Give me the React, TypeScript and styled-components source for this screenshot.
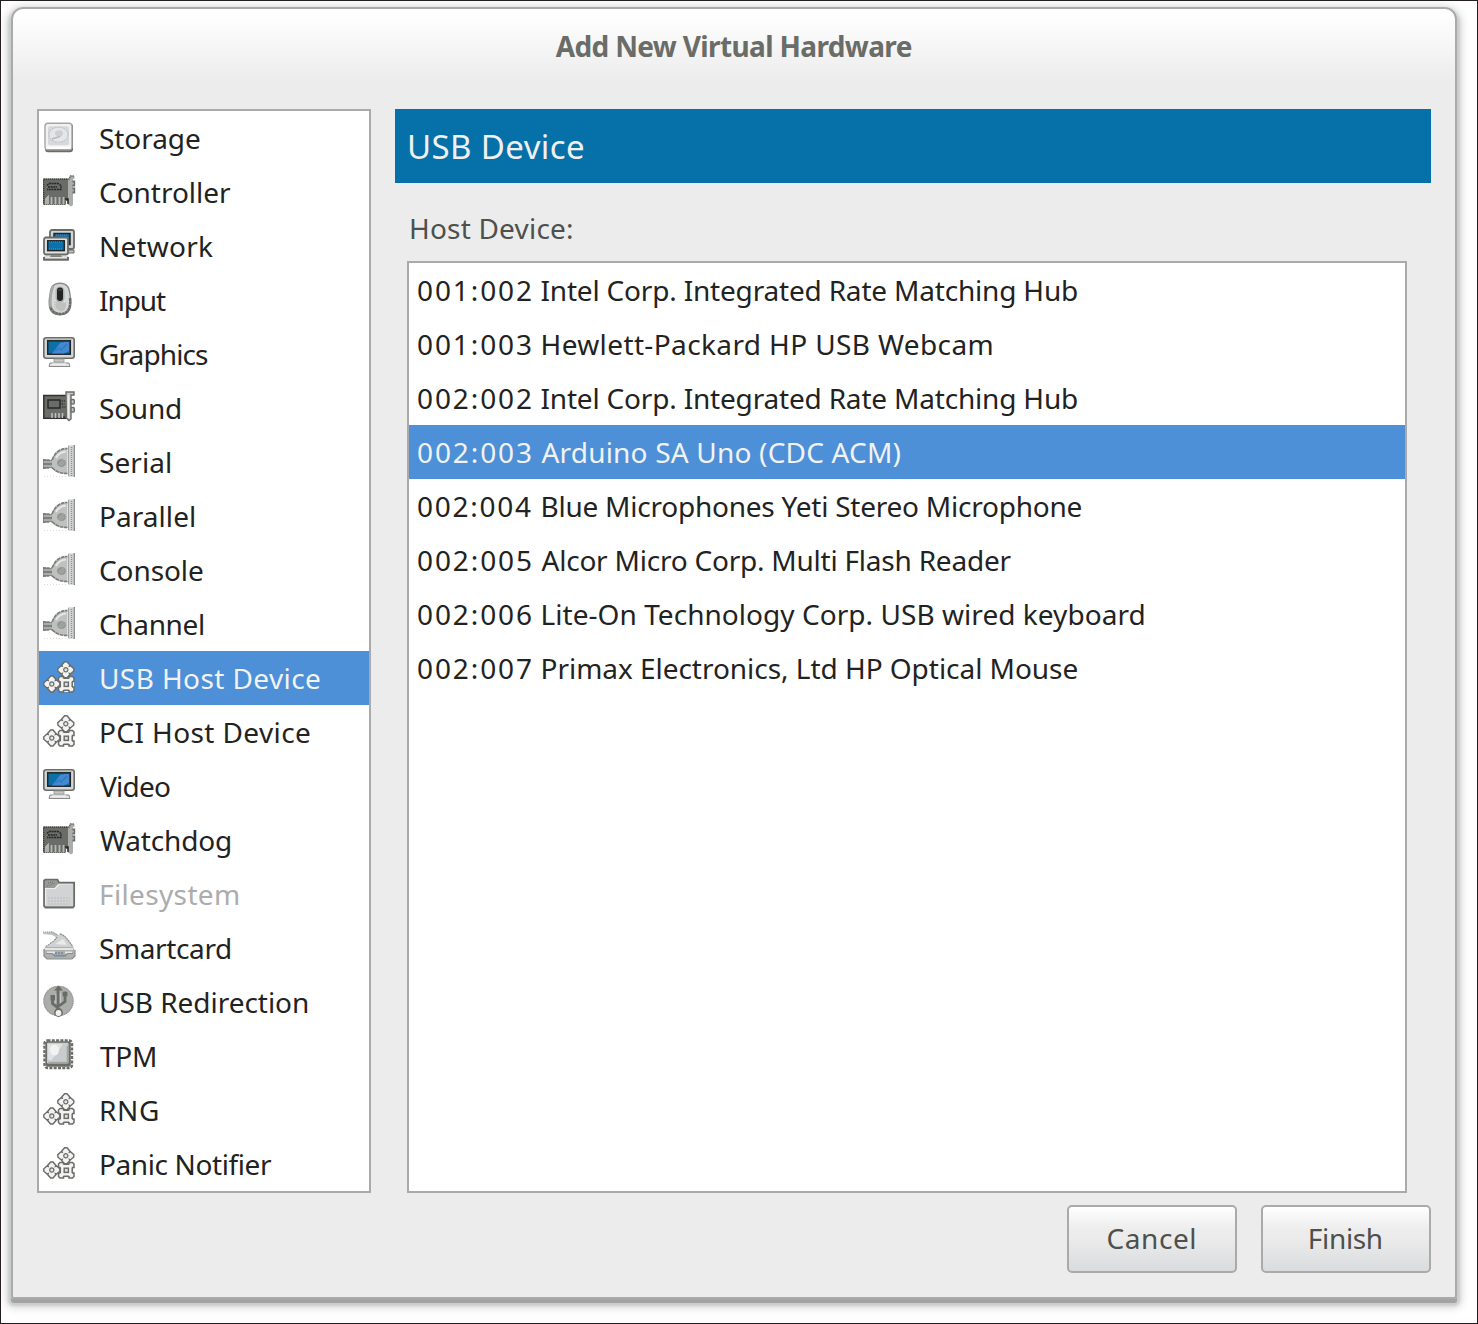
import React from 'react';
import styled, { createGlobalStyle } from 'styled-components';

const FONT = '"Noto Sans", "Open Sans", sans-serif';

const GlobalStyle = createGlobalStyle`
  *, *::before, *::after { box-sizing: border-box; }
  body { margin: 0; background: #fff; font-family: ${FONT}; }
`;

const Desktop = styled.div`
  width: 1478px;
  height: 1324px;
  padding: 6px 20px 0 10px;
  border: 1px solid #231f20;
  background: #fff;
  overflow: hidden;
`;

const Dialog = styled.section`
  width: 1446px;
  height: 1292px;
  display: flex;
  flex-direction: column;
  border: 2px solid #aaaaaa;
  border-radius: 12px 12px 3px 3px;
  background: linear-gradient(#ffffff 0, #fefefe 8px, #ececec 72px);
  box-shadow: 0 4px 0 0 #a3a3a3, 0 4px 3px 3px #c9cbcd, 0 4px 9px 5px rgba(0, 0, 0, 0.14);
`;

const TitleBar = styled.header`
  display: flex;
  justify-content: center;
  height: 74px;
  line-height: 74px;
  font-size: 28px;
  font-weight: 700;
  color: #6a6c67;
`;

const Body = styled.div`
  display: flex;
  gap: 24px;
  padding: 26px 24px 0;
`;

const ListBox = styled.ul<{ $width: number }>`
  width: ${(p) => p.$width}px;
  margin: 0;
  padding: 0;
  list-style: none;
  border: 2px solid #aaaaaa;
  background: #fff;
`;

const HardwareRow = styled.li<{ $selected?: boolean; $disabled?: boolean }>`
  display: flex;
  gap: 25px;
  height: 54px;
  padding-left: 4px;
  line-height: 54px;
  font-size: 28px;
  color: ${(p) => (p.$selected ? '#f2f2f2' : p.$disabled ? '#acacac' : '#1f2322')};
  background: ${(p) => (p.$selected ? '#4d90d7' : 'transparent')};
`;

const IconBox = styled.svg`
  display: block;
  flex: none;
  width: 32px;
  height: 32px;
  margin-top: 10px;
  overflow: visible;
`;

const Panel = styled.main`
  display: flex;
  flex-direction: column;
  width: 1036px;
`;

const Banner = styled.h1`
  margin: 0;
  height: 74px;
  padding-left: 13px;
  line-height: 75px;
  font-size: 33px;
  font-weight: 400;
  color: #f0f0f0;
  background: #0671a9;
`;

const PanelContent = styled.div`
  display: flex;
  flex-direction: column;
  padding: 12px 24px 0 12px;
`;

const FieldLabel = styled.div`
  height: 66px;
  padding-left: 3px;
  line-height: 66px;
  font-size: 28px;
  color: #4d504d;
`;

const DeviceList = styled(ListBox)`
  height: 932px;
`;

const DeviceRow = styled.li<{ $selected?: boolean }>`
  display: flex;
  height: 54px;
  padding-left: 9px;
  line-height: 54px;
  font-size: 28px;
  color: ${(p) => (p.$selected ? '#f2f2f2' : '#1f2322')};
  background: ${(p) => (p.$selected ? '#4d90d7' : 'transparent')};
`;

const DeviceId = styled.span`
  width: 123.500px;
  flex: none;
`;

const Actions = styled.footer`
  display: flex;
  justify-content: flex-end;
  gap: 24px;
  padding: 12px 24px 0;
`;

const Button = styled.button`
  display: flex;
  justify-content: center;
  width: 170px;
  height: 68px;
  padding: 0;
  border: 2px solid #aaaaaa;
  border-radius: 5px;
  background: linear-gradient(#ffffff, #ececec 36%, #ececec 48%, #d9dbdc);
  font: 400 28px/62px ${FONT};
  color: #4d504d;
`;

const Spaced = styled.span`
  display: block;
  flex: none;
  white-space: pre;
`;

const pen = document.createElement('canvas').getContext('2d')!;

/** A label tracked so that its letters span the given width. */
function Label({ text, width, size = 28, weight = 400 }: { text: string; width: number; size?: number; weight?: number }) {
  pen.font = `${weight} ${size}px ${FONT}`;
  const m = pen.measureText(text);
  const left = m.actualBoundingBoxLeft;
  const tracking = (width - left - m.actualBoundingBoxRight) / (text.length - 1);
  return (
    <Spaced style={{ letterSpacing: tracking, marginLeft: left <= -1.5 ? left + 1 : left, marginRight: -tracking }}>
      {text}
    </Spaced>
  );
}

const DARK = '#6a6c67';
const MID = '#a9aaa7';
const INK = '#222524';

const StorageIcon = () => (
  <g transform="translate(0 1.200)">
    <rect x="2" y="1.500" width="28" height="28.500" rx="3" fill={DARK} />
    <rect x="2" y="1" width="27" height="26.500" rx="3" fill="#f1f1f1" stroke="#a5a6a4" strokeWidth="1.400" />
    <rect x="5" y="4" width="21" height="19" rx="2" fill="#d6d9dc" />
    <ellipse cx="15.500" cy="12.500" rx="9.500" ry="7.500" fill="#e4e6e7" stroke="#b7babb" strokeDasharray="2 1" />
    <path d="M9 17c2-2 7-1 9-4" fill="none" stroke="#b2b5b7" strokeWidth="1.500" />
    <ellipse cx="16" cy="11" rx="4" ry="3" fill="#cdd0d3" />
    <path d="M3 25.500h25" stroke="#fff" strokeWidth="2" />
  </g>
);

const CardIcon = () => (
  <>
    <path d="M0 3.500h26V26h-3v4H0z" fill={DARK} />
    <path d="M.7 30V4.200H25" fill="none" stroke="#3c3f3d" strokeWidth="1.400" strokeDasharray="1 1" />
    <path d="M4 10.500L6 8.500h9l3 2v4H4M5 12h9" fill="none" stroke={INK} strokeWidth="1.300" strokeDasharray="2 .7" />
    <path d="M3 29v-5l2-2v7M8.500 29v-7M12.500 29v-7M16.500 29v-7M20.500 29v-7" fill="none" stroke="#b7b9b6" strokeWidth="1.800" />
    <path d="M0 29.500h24" stroke="#999b97" strokeDasharray="1 1" />
    <path d="M25 5l2-4h4.500v3H30v26l-2 1.500-3-2z" fill="#abadab" />
    <path d="M25.500 5l2-4H31" fill="none" stroke={DARK} strokeWidth="1.500" strokeDasharray="1.500 .6" />
    <path d="M29.500 6.500h1.800v4h-1.800m0 3h1.800v4h-1.800" fill="none" stroke={DARK} strokeWidth="1.800" />
    <path d="M22 24h3v5" fill="none" stroke={INK} strokeWidth="1.500" />
  </>
);

const NetworkIcon = () => (
  <>
    <rect x="7" y="1" width="24" height="19" rx="2" fill="#d1d4d6" stroke={DARK} strokeWidth="1.800" />
    <rect x="11" y="4.500" width="16" height="11" fill="#0b6ea5" stroke={INK} strokeWidth="1.500" />
    <path d="M13 6h12M24 8v5" stroke="#4a90d9" strokeDasharray="1 1" />
    <path d="M24 21h7v3h-6z" fill="#bfc1c0" stroke={DARK} />
    <rect x="1" y="8.500" width="24" height="17" rx="2" fill="#dee0e1" stroke={DARK} strokeWidth="1.800" />
    <rect x="4.700" y="11.800" width="16.600" height="9.800" fill="#0b71aa" stroke={INK} strokeWidth="1.500" />
    <path d="M6 13h14M6 20h14" stroke="#4a90d9" strokeDasharray="1 1" />
    <path d="M8 26h10l1 2H7z" fill="#888a87" />
    <rect x="0" y="27.800" width="26" height="4" rx="1" fill={DARK} />
    <path d="M2 28.800h22" stroke="#ececec" strokeWidth="1.500" />
  </>
);

const MouseIcon = () => (
  <>
    <path d="M17 .2C9.500.2 7.600 5 7 12c-1 5-1.300 9.500 0 13.500C8.500 30 12 31.700 17 31.700s8.500-1.700 10-6.200c1.300-4 1-8.500 0-13.500C26.400 5 24.500.2 17 .2z" fill="#d5d7d8" stroke="#8b8d89" strokeWidth="1.400" />
    <path d="M10.500 3C8 7 7.500 16 7.500 20c0 6 3 10.500 9.500 11" fill="none" stroke={MID} strokeWidth="2.400" />
    <path d="M27 15c1 10-2 16-10 16-4 0-8-2-9.800-7" fill="none" stroke={DARK} strokeWidth="2.400" strokeDasharray="3 .4" />
    <path d="M11 19h12v5c-1 3-3 4.500-6 4.500S12 27 11 24z" fill="#bfc1c1" />
    <path d="M12 20v4c1 3 3 4 5 4M17 19h5" fill="none" stroke="#eee" strokeDasharray="1 1" />
    <rect x="12.500" y="3.500" width="9" height="16" rx="4.500" fill="#b0b2b1" />
    <rect x="14" y="4.500" width="6" height="13.500" rx="3" fill={INK} />
    <path d="M15.500 7h3" stroke="#5a5d5a" />
  </>
);

const MonitorIcon = () => (
  <>
    <rect x=".8" y=".8" width="30.400" height="20.400" rx="2.500" fill="#d4d6d7" stroke={DARK} strokeWidth="1.600" />
    <path d="M3 2h26" stroke="#a6a8a6" />
    <rect x="4.700" y="3.800" width="22.600" height="13.400" fill="#0b70a8" stroke={INK} strokeWidth="1.500" />
    <path d="M9 16.500L17 6l5-1h4v9l-5 2.500z" fill="#4488d2" />
    <path d="M12 14l4-3 2 2 6-6" fill="none" stroke="#2a7dbb" strokeWidth="1.500" />
    <path d="M11 22h10v3H11z" fill="#c4c6c7" stroke="#989a97" strokeWidth=".8" />
    <path d="M7 26h19l1 3.500H6z" fill="#dfe1e2" stroke="#898b88" />
    <path d="M9 27h14" stroke="#fff" />
  </>
);

const SoundIcon = () => (
  <>
    <rect x=".8" y="4.500" width="23" height="22.800" fill={DARK} stroke="#303331" strokeWidth="1.500" />
    <rect x="5" y="9" width="12" height="8" fill={DARK} stroke={INK} strokeWidth="1.400" />
    <path d="M18.500 10h4M18.500 13h3M19 16h4" stroke={INK} strokeWidth="1.200" strokeDasharray="1.500 .8" />
    <path d="M9 27v-5M12.500 27v-5M16 27v-5M19.500 27v-5" stroke="#c0c2bf" strokeWidth="1.500" />
    <path d="M23 4V1h8v3h-3v24l-2 1.500-2.500-2.500z" fill="#c9cbcb" stroke={DARK} strokeWidth="1.400" />
    <path d="M25.500 4v23" stroke="#eee" strokeWidth="1.500" />
    <rect x="28" y="8.500" width="3.300" height="4.500" rx="1" fill="#c7c8c6" stroke={DARK} strokeWidth="1.400" />
    <rect x="28" y="16.500" width="3.300" height="4.500" rx="1" fill="#c7c8c6" stroke={DARK} strokeWidth="1.400" />
    <path d="M21 25v3" stroke={INK} />
  </>
);

const PlugIcon = () => (
  <>
    <path d="M0 14l8 1 4-3v14l-4-3-8 1z" fill="#8b8d89" />
    <path d="M1 17h9M1 21h9" stroke="#c9cbc9" strokeWidth="1.200" />
    <path d="M0 15h7M0 19h9M0 23h6" stroke={DARK} strokeDasharray="3 .7" />
    <path d="M9 15C12 8 16 3.500 24.500 3.500v25C16 28.500 12.500 26 9 22.500z" fill="#bfc1c1" />
    <path d="M9 15C12 8 16 3.500 24.500 3.500M9 22.500c3.500 3.500 7 6 15.500 6" fill="none" stroke="#7c7e7a" strokeWidth="1.700" strokeDasharray="4 .6" />
    <path d="M13 13c2-4 5-6 10-6.500" fill="none" stroke="#e6e7e7" strokeWidth="2" />
    <ellipse cx="18.500" cy="18" rx="4.500" ry="4" fill="#959794" />
    <path d="M15.500 20l5-5M17.500 21l4-4" stroke="#b4b6b4" />
    <rect x="25" y=".3" width="6.700" height="31.400" fill="#d1d3d4" />
    <path d="M25.500 1v30" stroke="#a0a29f" />
    <path d="M28.500 2v29" stroke="#8b8d89" strokeWidth="1.300" strokeDasharray="1 1" />
    <path d="M31.300 0v32" stroke="#858783" strokeWidth="1.200" />
    <path d="M1 31.500h22" stroke="#ddd" strokeDasharray="1 2" />
  </>
);

const Diamond = ({ x, y }: { x: number; y: number }) => (
  <g transform={`translate(${x} ${y})`}>
    <path
      d="M-1.200-8h2.400L4-4.800 3.600-3.600 4.800-4 8-1.200v2.400L4.800 4l-1.200-.4L4 4.800 1.200 8h-2.400L-4 4.800l.4-1.200-1.200.4L-8 1.200v-2.400L-4.800-4l1.200.4L-4-4.800z"
      fill="#f3f3f3"
      stroke={DARK}
      strokeWidth="1.400"
    />
    <circle r="2.100" fill="#e4e4e4" stroke={DARK} strokeWidth="1.200" />
  </g>
);

const CogsIcon = () => (
  <>
    <rect x="15.500" y="15.500" width="15.500" height="15.500" rx="1.500" fill="#f3f3f3" />
    <path d="M20.500 17.500v-2h-3.500l-1.500 1.500v3.500h2M26 17.500v-2h3.500L31 17v3.500h-2M20.500 29v2H17l-1.500-1.500V26h2M26 29v2h3.500l1.500-1.500V26h-2M20.500 17.300H26M20.500 29.200H26M17.300 20.500V26M29.200 20.500V26" fill="none" stroke={DARK} strokeWidth="1.500" />
    <rect x="21.200" y="21.200" width="4.200" height="4.200" fill="#ddd" stroke={DARK} strokeWidth="1.400" />
    <Diamond x={22.800} y={8.800} />
    <Diamond x={8.800} y={23} />
  </>
);

const FolderIcon = () => (
  <>
    <path d="M1 30V3.500L2.500 2.500h12L16 5.500h15V30z" fill="#999b98" />
    <path d="M2 11h10l4-4.500h14.500V29H2z" fill="#d1d3d5" />
    <path d="M2.500 28V11.500H12l4-4.500h13.500" fill="none" stroke="#eee" strokeWidth="1.200" />
    <path d="M5 21h22M5 24h22M5 27h22" stroke="#b9bbbc" strokeDasharray="2 1" />
    <path d="M5 6l5-1M4 9l8-3" stroke={DARK} strokeDasharray="1 1" />
    <path d="M1 8V3.500L2.500 2.500h12L16 5.700h15.200V29l-1.400 1.700H2.400L1 29z" fill="none" stroke={DARK} strokeWidth="1.700" />
  </>
);

const SmartcardIcon = () => (
  <>
    <path d="M0 1.500l10-1 8 5-1.500 2.500L9 4 0 3z" fill="#bfc1bf" />
    <path d="M0 1h9l7 4" fill="none" stroke="#929490" strokeDasharray="1 1" />
    <path d="M13 6l4-3c5 1 9 7 13 13H3c3-2 6-3 8-6z" fill="#cfd1d2" />
    <path d="M17 3c5 1 9 7 13 13M14 6c-2 3-5 6-12 10" fill="none" stroke="#8e908c" strokeWidth="1.300" strokeDasharray="2 .6" />
    <path d="M12 13l8-5 4 6z" fill="#e9eaea" />
    <path d="M2 16h28l2 4v5l-3 3H4l-3-3v-6z" fill="#aeb0af" />
    <path d="M2 18h28M4 21.500h8m10 0h7" stroke="#e4e5e5" strokeWidth="2" />
    <path d="M3 22.500h6l3 2.500h10l3-2.500h5M1 18v7l3 3h25l3-3v-6" fill="none" stroke="#8b8d8a" strokeWidth="1.200" />
    <path d="M11 24.500h12" stroke="#4a90d9" strokeWidth="1.600" strokeDasharray="1.500 .6" />
    <path d="M12 22h9" stroke={DARK} strokeDasharray="2 1" />
  </>
);

const UsbIcon = () => (
  <>
    <circle cx="15.500" cy="16" r="15.200" fill="#abadab" />
    <circle cx="15.500" cy="16" r="14.500" fill="none" stroke="#92948f" strokeWidth="1.200" strokeDasharray="1 1" />
    <path d="M15 28V4M15 23L9.500 18.500v-6M16 21l6-4.500V8" fill="none" stroke={DARK} strokeWidth="2.800" />
    <path d="M11 5.500L15.500.5l4.500 5z" fill={DARK} />
    <rect x="7.500" y="10" width="5" height="5.500" fill={DARK} />
    <rect x="19.500" y="6.500" width="5" height="5" rx="1.500" fill={DARK} />
    <path d="M17.500 8v10M12.800 9v9" stroke="#c6c8c6" />
    <circle cx="15.500" cy="27.500" r="4.400" fill={DARK} />
    <circle cx="15.500" cy="28" r="2.900" fill="#f1f1f1" />
  </>
);

const ChipIcon = () => (
  <>
    <rect x="2.300" y="2.300" width="25.500" height="25.500" rx="2" fill={DARK} />
    <rect x="1.500" y="1.500" width="27.500" height="27.500" rx="3" fill="none" stroke={DARK} strokeWidth="2.400" strokeDasharray="3 1.300" />
    <rect x="4" y="3.800" width="21.500" height="20.700" rx="1" fill="#c9cccf" />
    <path d="M5 20V5h15L8 22z" fill="#dfe1e2" />
    <ellipse cx="11.500" cy="11" rx="4.500" ry="5.500" fill="#f2f2f2" />
    <path d="M5.500 23.500h19V7" fill="none" stroke="#a4a6a5" strokeWidth="1.600" />
  </>
);

const ICONS = {
  storage: StorageIcon,
  card: CardIcon,
  network: NetworkIcon,
  mouse: MouseIcon,
  monitor: MonitorIcon,
  sound: SoundIcon,
  plug: PlugIcon,
  cogs: CogsIcon,
  folder: FolderIcon,
  smartcard: SmartcardIcon,
  usb: UsbIcon,
  chip: ChipIcon,
};

type Hardware = { name: string; width: number; icon: keyof typeof ICONS; selected?: boolean; disabled?: boolean };

const HARDWARE: Hardware[] = [
  { name: 'Storage', width: 100, icon: 'storage' },
  { name: 'Controller', width: 131, icon: 'card' },
  { name: 'Network', width: 112, icon: 'network' },
  { name: 'Input', width: 66, icon: 'mouse' },
  { name: 'Graphics', width: 108, icon: 'monitor' },
  { name: 'Sound', width: 80, icon: 'sound' },
  { name: 'Serial', width: 70, icon: 'plug' },
  { name: 'Parallel', width: 93, icon: 'plug' },
  { name: 'Console', width: 103, icon: 'plug' },
  { name: 'Channel', width: 103, icon: 'plug' },
  { name: 'USB Host Device', width: 219, icon: 'cogs', selected: true },
  { name: 'PCI Host Device', width: 209, icon: 'cogs' },
  { name: 'Video', width: 70, icon: 'monitor' },
  { name: 'Watchdog', width: 130, icon: 'card' },
  { name: 'Filesystem', width: 137, icon: 'folder', disabled: true },
  { name: 'Smartcard', width: 130, icon: 'smartcard' },
  { name: 'USB Redirection', width: 207, icon: 'usb' },
  { name: 'TPM', width: 55, icon: 'chip' },
  { name: 'RNG', width: 57, icon: 'cogs' },
  { name: 'Panic Notifier', width: 171, icon: 'cogs' },
];

const DEVICES = [
  { id: '001:002', name: 'Intel Corp. Integrated Rate Matching Hub', width: 535.500 },
  { id: '001:003', name: 'Hewlett-Packard HP USB Webcam', width: 449 },
  { id: '002:002', name: 'Intel Corp. Integrated Rate Matching Hub', width: 535.500 },
  { id: '002:003', name: 'Arduino SA Uno (CDC ACM)', width: 359, selected: true },
  { id: '002:004', name: 'Blue Microphones Yeti Stereo Microphone', width: 539 },
  { id: '002:005', name: 'Alcor Micro Corp. Multi Flash Reader', width: 470 },
  { id: '002:006', name: 'Lite-On Technology Corp. USB wired keyboard', width: 601 },
  { id: '002:007', name: 'Primax Electronics, Ltd HP Optical Mouse', width: 535 },
];

export default function App() {
  return (
    <>
      <GlobalStyle />
      <Desktop>
        <Dialog>
          <TitleBar>
            <Label text="Add New Virtual Hardware" width={356} weight={700} />
          </TitleBar>
          <Body>
            <ListBox $width={334}>
              {HARDWARE.map(({ name, width, icon, selected, disabled }) => {
                const Drawing = ICONS[icon];
                return (
                  <HardwareRow key={name} $selected={selected} $disabled={disabled}>
                    <IconBox viewBox="0 0 32 32">
                      <Drawing />
                    </IconBox>
                    <Label text={name} width={width} />
                  </HardwareRow>
                );
              })}
            </ListBox>
            <Panel>
              <Banner>
                <Label text="USB Device" width={174} size={33} />
              </Banner>
              <PanelContent>
                <FieldLabel>
                  <Label text="Host Device:" width={161} />
                </FieldLabel>
                <DeviceList $width={1000}>
                  {DEVICES.map(({ id, name, width, selected }) => (
                    <DeviceRow key={id} $selected={selected}>
                      <DeviceId>
                        <Label text={id} width={113} />
                      </DeviceId>
                      <Label text={name} width={width} />
                    </DeviceRow>
                  ))}
                </DeviceList>
              </PanelContent>
            </Panel>
          </Body>
          <Actions>
            <Button>
              <Label text="Cancel" width={87} />
            </Button>
            <Button>
              <Label text="Finish" width={72} />
            </Button>
          </Actions>
        </Dialog>
      </Desktop>
    </>
  );
}
